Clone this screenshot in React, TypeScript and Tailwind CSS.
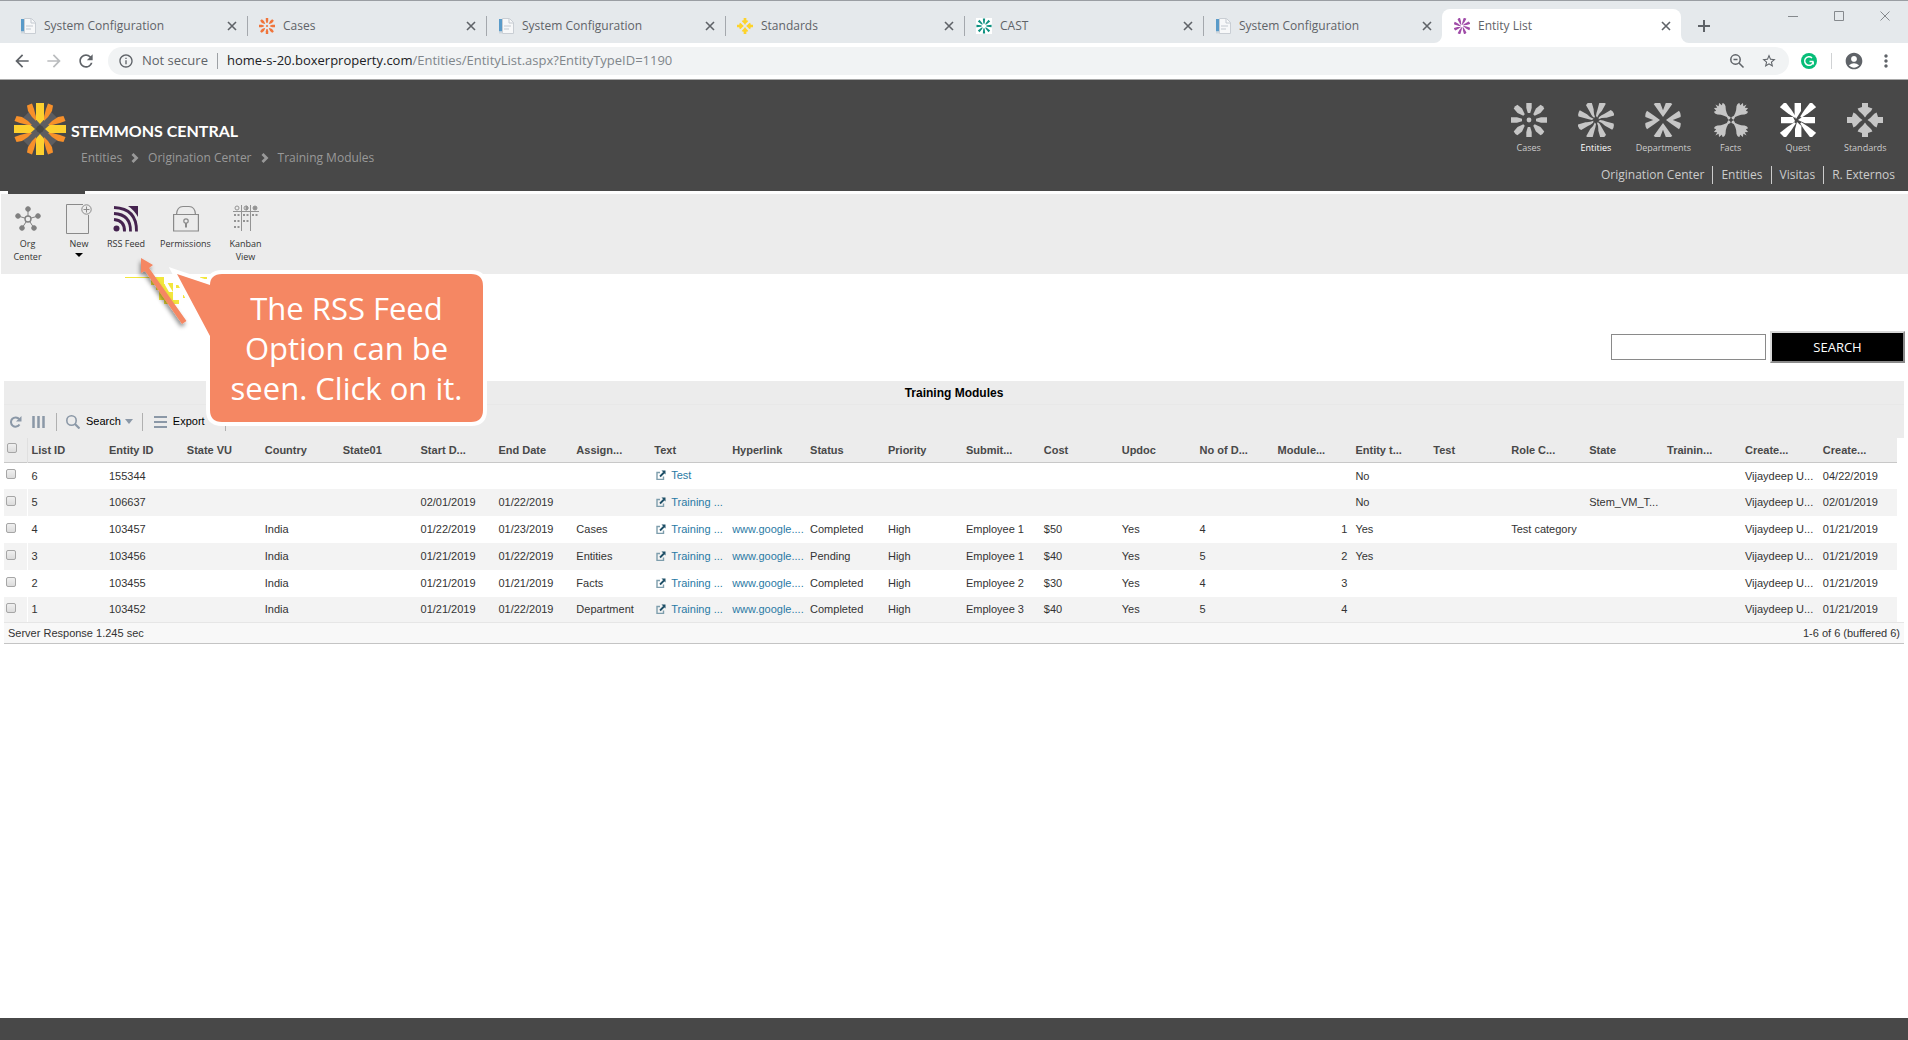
import type { ReactNode } from 'react';
import { clsx } from 'clsx';
import { MdAccountCircle, MdArrowBack, MdArrowForward, MdInfoOutline, MdMoreVert, MdRefresh, MdStarBorder } from 'react-icons/md';

type BurstName = 'cases' | 'entities' | 'departments' | 'facts' | 'quest' | 'standards' | 'cast';

const QUARTERS = [0, 90, 180, 270];
const DIAGONALS = [45, 135, 225, 315];
const EIGHTHS = [0, 45, 90, 135, 180, 225, 270, 315];

function Spin({ angles, d }: { angles: number[]; d: string }) {
  return (
    <>
      {angles.map((a) => (
        <path key={a} d={d} transform={`rotate(${a})`} />
      ))}
    </>
  );
}

function Burst({ name, className }: { name: BurstName; className?: string }) {
  return (
    <svg viewBox="-18 -17 36 34" className={className} fill="currentColor" aria-hidden="true">
      {name === 'cases' && (
        <>
          <circle r="2.4" />
          <Spin angles={QUARTERS} d="M-2.7-18H2.7V-12L1.2-7H-1.2L-2.7-12Z" />
          <Spin angles={DIAGONALS} d="M-2.6-19 Q0-20 2.6-19 L3.2-13L1-7H-1L-3.2-13Z" />
        </>
      )}
      {name === 'entities' && (
        <Spin angles={EIGHTHS} d="M3.4-17.5 Q6.5-18.700 9.800-16.2 L5.8-9 Q2.4-6 1.2-2.4 L0-4 Q.4-7.5 1.4-10Z" />
      )}
      {name === 'departments' && (
        <Spin angles={QUARTERS} d="M0-3L-4-8.4L-9.3-16 Q-6.500-18.200-3-17.6L0-9.8L3-17.6Q6.500-18.200 9.3-16L4-8.4Z" />
      )}
      {name === 'facts' && (
        <Spin
          angles={DIAGONALS}
          d="M-1.7-2.2 L-.9-5 L-2-8 Q-3.200-11-5.8-13.500 Q-7.400-16-6.200-18 L-4-17 L-3.600-20.500 L-1-18.5 L0-22 L1-18.5 L3.600-20.500 L4-17 L6.2-18 Q7.400-16 5.8-13.500 Q3.200-11 2-8 L.9-5 L1.7-2.2 L0-1.400Z"
        />
      )}
      {name === 'quest' && (
        <>
          <path d="M-3.4-18H3V-9L-2-1L-3.4-4Z" />
          <path d="M17-3V3.2H7L0 0L4-3Z" />
          <path d="M3.4 18H-3V9L-1 2L3.4 6Z" />
          <path d="M-17-3V3.2H-5L-3 1L-5-3Z" />
          <Spin angles={DIAGONALS} d="M-3.8-22L3.8-22L2.6-12L.8-4H-.8L-2.6-12Z" />
        </>
      )}
      {name === 'standards' && (
        <Spin angles={QUARTERS} d="M-3-18H3V-13L7.4-11.600Q6.500-9 4.400-7.600Q1.8-5.500 0-2.500Q-1.8-5.500-4.400-7.600Q-6.500-9-7.4-11.600L-3-13Z" />
      )}
      {name === 'cast' && (
        <>
          <path fill="#ffffff" d="M-18-18H18V18H-18Z" />
          <Spin angles={EIGHTHS} d="M-2.6-17H2.6L1.6-7L0-4L-1.6-7Z" />
        </>
      )}
    </svg>
  );
}

function PageIcon() {
  return (
    <svg viewBox="0 0 16 16" className="h-4 w-4" aria-hidden="true">
      <path d="M1 1h3.5v12.500H1z" fill="#5a9bc9" />
      <path d="M4.500 0.500h7l4 4V15.500h-11z" fill="#f7f8f9" stroke="#c9ced4" />
      <path d="M11 1v4h4.500M6 8h7M6 11h5" stroke="#c3c9d0" fill="none" />
      <path d="M1 13.500h3.500v2H1z" fill="#cfd6dc" />
    </svg>
  );
}

const tabs: { title: string; icon: ReactNode; active?: boolean }[] = [
  { title: 'System Configuration', icon: <PageIcon /> },
  { title: 'Cases', icon: <Burst name="cases" className="h-4 w-4 text-[#f0743a]" /> },
  { title: 'System Configuration', icon: <PageIcon /> },
  { title: 'Standards', icon: <Burst name="standards" className="h-4 w-4 text-[#fdd32b]" /> },
  { title: 'CAST', icon: <Burst name="cast" className="h-4 w-4 text-[#0d9080]" /> },
  { title: 'System Configuration', icon: <PageIcon /> },
  { title: 'Entity List', icon: <Burst name="entities" className="h-4 w-4 text-[#a04ca8]" />, active: true },
];

function CloseIcon() {
  return (
    <svg viewBox="0 0 10 10" className="h-[10px] w-[10px]" stroke="currentColor" strokeWidth="1.600" aria-hidden="true">
      <path d="M1 1l8 8M9 1l-8 8" />
    </svg>
  );
}

function TabStrip() {
  return (
    <div className="flex h-[43px] border-t border-[#9a9ea3] bg-[#e5e9ec] pl-2">
      <div className="flex min-w-0 flex-1 pt-2">
        {tabs.map((tab, i) => (
          <div
            key={i}
            className={clsx(
              'relative flex min-w-0 max-w-[239px] flex-1 items-center pr-[10px] pl-3',
              tab.active && 'rounded-t-lg bg-white',
            )}
          >
            {tab.icon}
            <span className="ml-2 flex-1 truncate text-[12px] text-[#5f6368]">{tab.title}</span>
            <button type="button" aria-label="Close tab" className="text-[#5f6368]">
              <CloseIcon />
            </button>
            {!tab.active && i < 5 && <span className="absolute top-[7px] -right-px h-5 w-px bg-[#a4a8ad]" />}
            {tab.active && (
              <>
                <svg viewBox="0 0 8 8" className="absolute bottom-0 -left-2 h-2 w-2" aria-hidden="true">
                  <path d="M8 0v8H0a8 8 0 0 0 8-8z" fill="#fff" />
                </svg>
                <svg viewBox="0 0 8 8" className="absolute -right-2 bottom-0 h-2 w-2" aria-hidden="true">
                  <path d="M0 0v8h8a8 8 0 0 1-8-8z" fill="#fff" />
                </svg>
              </>
            )}
          </div>
        ))}
        <button type="button" aria-label="New tab" className="ml-[17px] flex items-center text-[#5f6368]">
          <svg viewBox="0 0 12 12" className="h-3 w-3" stroke="currentColor" strokeWidth="2" aria-hidden="true">
            <path d="M6 0v12M0 6h12" />
          </svg>
        </button>
      </div>
      <div className="flex h-[29px] text-[#85898d]">
        {['M0 5.500h10', 'M.5.500h9v9h-9z', 'M.5.500l9 9M9.500.500l-9 9'].map((d, i) => (
          <button key={i} type="button" aria-label={['Minimize', 'Maximize', 'Close'][i]} className="flex w-[46px] items-center justify-center">
            <svg viewBox="0 0 10 10" className="h-[10px] w-[10px]" fill="none" stroke="currentColor" aria-hidden="true">
              <path d={d} />
            </svg>
          </button>
        ))}
      </div>
    </div>
  );
}

function AddressBar() {
  return (
    <div className="flex h-[37px] items-center border-b border-[#a9a9a9] bg-white px-3 text-[#5f6368]">
      <button type="button" aria-label="Back"><MdArrowBack className="h-5 w-5" /></button>
      <button type="button" aria-label="Forward" className="ml-3 text-[#babcbe]"><MdArrowForward className="h-5 w-5" /></button>
      <button type="button" aria-label="Reload" className="ml-3"><MdRefresh className="h-5 w-5" /></button>
      <div className="ml-3 flex h-7 flex-1 items-center rounded-full bg-[#f1f3f4] pl-[10px] text-[13px]">
        <MdInfoOutline className="h-4 w-4" />
        <span className="ml-2 w-[67px] whitespace-nowrap">Not secure</span>
        <span className="ml-2 h-4 w-px bg-[#9da1a5]" />
        <span className="ml-[9px] flex-1 text-[#80868b]">
          <span className="text-[#202124]">home-s-20.boxerproperty.com</span>/Entities/EntityList.aspx?EntityTypeID=1190
        </span>
        <svg viewBox="0 0 16 16" className="h-4 w-4" fill="none" stroke="currentColor" strokeWidth="1.500" aria-hidden="true">
          <circle cx="6.500" cy="6.500" r="4.700" />
          <path d="M10 10l4.500 4.500M4.500 6.500h4" />
        </svg>
        <button type="button" aria-label="Bookmark" className="mr-3 ml-4"><MdStarBorder className="h-4 w-4" /></button>
      </div>
      <svg viewBox="0 0 16 16" className="ml-3 h-4 w-4" aria-label="Grammarly">
        <circle cx="8" cy="8" r="8" fill="#06bd78" />
        <path d="M11 5A4.300 4.300 0 1 0 12.200 8.800M12.400 8.500H8.500M12.200 8.400v3" fill="none" stroke="#fff" strokeWidth="1.500" />
      </svg>
      <span className="ml-[14px] h-4 w-px bg-[#d0d2d4]" />
      <button type="button" aria-label="Profile" className="ml-3"><MdAccountCircle className="h-5 w-5" /></button>
      <button type="button" aria-label="Menu" className="ml-3"><MdMoreVert className="h-5 w-5" /></button>
    </div>
  );
}

function Logo() {
  return (
    <svg viewBox="-26 -26 52 52" className="h-[52px] w-[52px]" aria-hidden="true">
      <g fill="#5d5d60">
        <Spin angles={DIAGONALS} d="M-7-20H7V-3H-7Z" />
      </g>
      <g fill="#f7902a">
        <Spin angles={QUARTERS} d="M4-12L6-20L8-25.500L13-23.500L12-18L8-12L4-8Z" />
        <Spin angles={QUARTERS} d="M-4-12L-6-20L-8-25.500L-13-23.500L-12-18L-8-12L-4-8Z" />
      </g>
      <g fill="#fdd02f">
        <Spin angles={QUARTERS} d="M-4-26H4V-9.500L0-5L-4-9.500Z" />
      </g>
      <circle r="3.500" fill="#484848" />
    </svg>
  );
}

function Chevron() {
  return (
    <svg viewBox="0 0 8 10" className="mx-[9px] h-[10px] w-2" fill="none" stroke="currentColor" strokeWidth="2.800" aria-hidden="true">
      <path d="M1.500 1l4 4-4 4" />
    </svg>
  );
}

const apps: { label: string; icon: BurstName }[] = [
  { label: 'Cases', icon: 'cases' },
  { label: 'Entities', icon: 'entities' },
  { label: 'Departments', icon: 'departments' },
  { label: 'Facts', icon: 'facts' },
  { label: 'Quest', icon: 'quest' },
  { label: 'Standards', icon: 'standards' },
];

function Header() {
  return (
    <header className="flex h-[111px] justify-between bg-[#484848] pt-[23px]">
      <div className="flex pl-[14px]">
        <Logo />
        <div className="pt-4 pl-[5px]">
          <div className="font-[Lato,sans-serif] text-[16px] leading-[23px] font-bold text-white">STEMMONS CENTRAL</div>
          <nav className="flex items-center pt-[7px] pl-[10px] text-[12px] leading-[18px] text-[#999]">
            <a href="#">Entities</a>
            <Chevron />
            <a href="#">Origination Center</a>
            <Chevron />
            <a href="#">Training Modules</a>
          </nav>
        </div>
      </div>
      <div className="flex flex-col items-end">
        <nav className="flex w-[413px] pr-[9px]">
          {apps.map((app) => (
            <a key={app.label} href="#" className="flex flex-1 basis-0 flex-col items-center">
              <Burst name={app.icon} className={clsx('h-[34px] w-9', app.icon === 'quest' ? 'text-white' : 'text-[#c6c6c6]')} />
              <span className={clsx('mt-1 text-[9px] leading-[14px]', app.icon === 'entities' ? 'text-white' : 'text-[#ccc]')}>
                {app.label}
              </span>
            </a>
          ))}
        </nav>
        <nav className="mt-[11px] flex divide-x divide-[#ccc] pr-[5px] text-[12px] leading-[18px] text-[#ccc]">
          <a href="#" className="px-2">Origination Center</a>
          <a href="#" className="px-2">Entities</a>
          <a href="#" className="px-2">Visitas</a>
          <a href="#" className="px-2">R. Externos</a>
        </nav>
      </div>
    </header>
  );
}

function ToolButton({ label, width, icon, menu }: { label: ReactNode; width: string; icon: ReactNode; menu?: boolean }) {
  return (
    <button type="button" className={clsx('flex flex-col items-center text-[9px] leading-[13px] text-[#333]', width)}>
      {icon}
      <span className="mt-[3px]">{label}</span>
      {menu && (
        <svg viewBox="0 0 8 4" className="mt-[3px] h-1 w-2" aria-hidden="true">
          <path d="M0 0h8L4 4z" />
        </svg>
      )}
    </button>
  );
}

function Callout() {
  return (
    <div className="absolute top-[66px] left-[120px] h-[190px] w-[370px]">
      <svg viewBox="0 0 370 190" className="absolute inset-0 h-full w-full" aria-hidden="true">
        <defs>
          <filter id="soft" x="-30%" y="-30%" width="160%" height="160%">
            <feDropShadow dx="-1" dy="3" stdDeviation="2" floodOpacity="0.45" />
          </filter>
        </defs>
        <path d="M5 20h26v1H5zM31 20h13v8H31zM36 27h14v6H36zM39 33h14v10H39zM44 43h15v4H44zM46 26h7v9h-7zM56 28h4v3h-4zM63 38h2v3h-2zM80 20h7v2h-7z" fill="#f2e63c" />
        <path d="M44 20l9 15h-4l-4-7z" fill="#fff" />
        <g filter="url(#soft)" fill="#f58763">
          <path d="M21 1l12 7-4 3 37.500 53-4.500 3L25 14l-4 2z" />
        </g>
        <path
          d="M57 17L90 28C90 21 94 17 102 17H351Q363 17 363 29V153Q363 165 351 165H102Q90 165 90 153V79Z"
          fill="#f58763"
          stroke="#fff"
          strokeWidth="8"
          paintOrder="stroke"
        />
      </svg>
      <p className="absolute top-[31px] right-[7px] w-[273px] text-center text-[31px] leading-[40px] text-white">
        The RSS Feed
        <br />
        Option can be
        <br />
        seen. Click on it.
      </p>
    </div>
  );
}

function ActionBar() {
  return (
    <div className="relative h-[83px] bg-white">
      <div className="ml-2 h-[3px] w-[77px] bg-[#484848]" />
      <div className="ml-px flex h-20 items-start bg-[#ececec] pt-[10px] pl-px">
        <ToolButton
          width="w-[51px]"
          label={<>Org<br />Center</>}
          icon={
            <svg viewBox="0 0 26 30" className="h-[30px] w-[26px]" fill="#808080" stroke="#808080" aria-hidden="true">
              <path d="M13 5v9M3 12l10 3 10-3M7 24l6-9 6 9" fill="none" />
              <circle cx="13" cy="5" r="2.300" />
              <circle cx="3" cy="12" r="2.300" />
              <circle cx="23" cy="12" r="2.300" />
              <circle cx="7" cy="24" r="2.300" />
              <circle cx="19" cy="24" r="2.300" />
              <circle cx="13" cy="15" r="3" fill="#ececec" strokeWidth="1.400" />
            </svg>
          }
        />
        <ToolButton
          width="w-[52px]"
          label="New"
          menu
          icon={
            <svg viewBox="0 0 26 30" className="h-[30px] w-[26px]" fill="none" stroke="#8a8a8a" aria-hidden="true">
              <path d="M22.500 11v18.500h-22v-29H17" />
              <circle cx="20.500" cy="5.500" r="4.700" />
              <path d="M20.500 2.500v6M17.500 5.500h6" />
            </svg>
          }
        />
        <ToolButton
          width="w-[42px]"
          label="RSS Feed"
          icon={
            <svg viewBox="0 0 26 30" className="h-[30px] w-[26px]" fill="none" stroke="#45234f" strokeWidth="2.800" aria-hidden="true">
              <circle cx="3.500" cy="24.500" r="3" fill="#45234f" stroke="none" />
              <path d="M1 15.500q11 1 10.500 12M1 9.500q17 1 16.500 18M1 3.500q23 1 22.500 24" />
              <path d="M15 2h10v11Q21 6 15 2z" fill="#45234f" stroke="none" />
            </svg>
          }
        />
        <ToolButton
          width="w-[77px]"
          label="Permissions"
          icon={
            <svg viewBox="0 0 26 30" className="h-[30px] w-[26px]" fill="none" stroke="#8a8a8a" strokeWidth="1.200" aria-hidden="true">
              <path d="M.600 10.500h24.800v16.500H.600zM3.500 10.500Q4 2.500 10 2.500h6Q22 2.500 22.500 10.500" />
              <circle cx="13" cy="17" r="2.200" />
              <path d="M13 19v4.500" strokeWidth="2" />
            </svg>
          }
        />
        <ToolButton
          width="w-[43px]"
          label={<>Kanban<br />View</>}
          icon={
            <svg viewBox="0 0 26 30" className="h-[30px] w-[26px]" fill="none" stroke="#949494" aria-hidden="true">
              <path d="M0 7.500h26M8.500 1v26M17.500 1v26" />
              <circle cx="4" cy="4" r="2" />
              <circle cx="13" cy="4" r="2" />
              <path d="M13 2a2 2 0 0 1 0 4z" fill="#949494" />
              <circle cx="22" cy="4" r="2" fill="#949494" />
              <path d="M1 11h6M10 11h6M19 11h6M1 17h6M10 17h6M1 23h6" strokeWidth="2" strokeDasharray="2 1.500" />
            </svg>
          }
        />
      </div>
      <Callout />
    </div>
  );
}

function SearchRow() {
  return (
    <form className="flex items-center justify-end gap-1 pt-[57px] pr-[3px] pb-[18px]">
      <input type="text" aria-label="Search entities" className="h-[26px] w-[155px] border border-[#8a8a8a] bg-white px-1 text-[13px]" />
      <button type="button" className="h-8 w-[135px] border-2 border-t-[#d8d8d8] border-r-[#8a8a8a] border-b-[#8a8a8a] border-l-[#d8d8d8] bg-black pt-px text-[13px] text-white">
        SEARCH
      </button>
    </form>
  );
}

const columns = [
  'List ID', 'Entity ID', 'State VU', 'Country', 'State01', 'Start D...', 'End Date', 'Assign...',
  'Text', 'Hyperlink', 'Status', 'Priority', 'Submit...', 'Cost', 'Updoc', 'No of D...',
  'Module...', 'Entity t...', 'Test', 'Role C...', 'State', 'Trainin...', 'Create...', 'Create...',
];

const LINK = 'www.google....';
const OWNER = 'Vijaydeep U...';

const rows = [
  ['6', '155344', '', '', '', '', '', '', 'Test', '', '', '', '', '', '', '', '', 'No', '', '', '', '', OWNER, '04/22/2019'],
  ['5', '106637', '', '', '', '02/01/2019', '01/22/2019', '', 'Training ...', '', '', '', '', '', '', '', '', 'No', '', '', 'Stem_VM_T...', '', OWNER, '02/01/2019'],
  ['4', '103457', '', 'India', '', '01/22/2019', '01/23/2019', 'Cases', 'Training ...', LINK, 'Completed', 'High', 'Employee 1', '$50', 'Yes', '4', '1', 'Yes', '', 'Test category', '', '', OWNER, '01/21/2019'],
  ['3', '103456', '', 'India', '', '01/21/2019', '01/22/2019', 'Entities', 'Training ...', LINK, 'Pending', 'High', 'Employee 1', '$40', 'Yes', '5', '2', 'Yes', '', '', '', '', OWNER, '01/21/2019'],
  ['2', '103455', '', 'India', '', '01/21/2019', '01/21/2019', 'Facts', 'Training ...', LINK, 'Completed', 'High', 'Employee 2', '$30', 'Yes', '4', '3', '', '', '', '', '', OWNER, '01/21/2019'],
  ['1', '103452', '', 'India', '', '01/21/2019', '01/22/2019', 'Department', 'Training ...', LINK, 'Completed', 'High', 'Employee 3', '$40', 'Yes', '5', '4', '', '', '', '', '', OWNER, '01/21/2019'],
];

function Check({ label }: { label: string }) {
  return (
    <input
      type="checkbox"
      aria-label={label}
      className="block h-[10px] w-[10px] appearance-none rounded-xs border border-[#a6a6a6] bg-linear-to-b from-[#f0f0f0] to-[#dcdcdc]"
    />
  );
}

function Cell({ column, value }: { column: number; value: string }) {
  if (column === 8) {
    return (
      <a href="#" className="flex items-center gap-[5px] pb-px text-[#2a7aa5]">
        <svg viewBox="0 0 10 10" className="ml-[2px] h-[10px] w-[10px]" fill="none" stroke="#2d6480" aria-hidden="true">
          <path d="M4 2.500H1V9.500H7.500V6.500" stroke="#7d9dac" strokeWidth="1.400" />
          <path d="M4 6.500L8 2.500" stroke="#1d4e66" strokeWidth="1.800" />
          <path d="M5.500 0.500H9.500V4.500z" fill="#1d4e66" stroke="none" />
        </svg>
        {value}
      </a>
    );
  }
  if (column === 9 && value) return <a href="#" className="text-[#2a7aa5]">{value}</a>;
  return <>{value}</>;
}

function Grid() {
  return (
    <section className="mx-1 font-['Liberation_Sans',Arial,sans-serif] text-[11px] text-[#333]">
      <h1 className="bg-[#ececec] pt-px text-center text-[12px] leading-[22px] font-bold text-black">Training Modules</h1>
      <div className="flex h-[34px] items-center border-t border-[#e8e8e8] bg-[#ececec] pl-[5px] text-black">
        <button type="button" aria-label="Refresh">
          <svg viewBox="0 0 13 12" className="h-3 w-[13px]" fill="none" stroke="#8b98a7" strokeWidth="2" aria-hidden="true">
            <path d="M10.200 3.200A4.600 4.600 0 1 0 10.500 8.500" />
            <path d="M12.500 0v5.500H7z" fill="#8b98a7" stroke="none" />
          </svg>
        </button>
        <button type="button" aria-label="Columns" className="ml-[10px]">
          <svg viewBox="0 0 13 12" className="h-3 w-[13px]" stroke="#8b98a7" strokeWidth="2.500" aria-hidden="true">
            <path d="M1.500 0v12M6.500 0v12M11.500 0v12" />
          </svg>
        </button>
        <span className="ml-[11px] h-[18px] w-px bg-[#b0b0b0]" />
        <button type="button" className="ml-[9px] flex items-center">
          <svg viewBox="0 0 14 14" className="h-[14px] w-[14px]" fill="none" stroke="#8b98a7" aria-hidden="true">
            <circle cx="5.500" cy="5.500" r="4.700" strokeWidth="1.600" />
            <path d="M9 9l4.500 4.500" strokeWidth="2.200" />
          </svg>
          <span className="ml-[6px]">Search</span>
          <svg viewBox="0 0 8 5" className="ml-1 h-[5px] w-2" fill="#8b98a7" aria-hidden="true"><path d="M0 0h8L4 5z" /></svg>
        </button>
        <span className="ml-[9px] h-[18px] w-px bg-[#b0b0b0]" />
        <button type="button" className="ml-[11px] flex items-center">
          <svg viewBox="0 0 13 12" className="h-3 w-[13px]" stroke="#8b98a7" strokeWidth="2.200" aria-hidden="true">
            <path d="M0 1h13M0 6h13M0 11h13" />
          </svg>
          <span className="ml-[6px]">Export</span>
          <svg viewBox="0 0 8 5" className="ml-1 h-[5px] w-2" fill="#8b98a7" aria-hidden="true"><path d="M0 0h8L4 5z" /></svg>
        </button>
        <span className="ml-2 h-[18px] w-px bg-[#b0b0b0]" />
      </div>
      <div className="border-b border-[#e6e6e6] pr-[7px]">
        <table className="w-full table-fixed border-collapse">
          <thead>
            <tr className="h-6 border-b border-[#c8c8c8] bg-[#ececec] text-left text-[#484848]">
              <th className="w-[23px] border-r border-[#e0e0e0] pb-1 pl-[3px]"><Check label="Select all" /></th>
              {columns.map((c, i) => (
                <th key={i} className="overflow-hidden px-1 font-bold whitespace-nowrap">{c}</th>
              ))}
            </tr>
          </thead>
          <tbody>
            {rows.map((row) => (
              <tr key={row[0]} className="h-[27px] last:h-[25px] even:bg-[#f3f3f3]">
                <td className="border-r border-white pb-[3px] pl-[2px]"><Check label={`Select ${row[1]}`} /></td>
                {row.map((value, i) => (
                  <td key={i} className={clsx('px-1 whitespace-nowrap', i === 16 && 'text-right')}>
                    <Cell column={i} value={value} />
                  </td>
                ))}
              </tr>
            ))}
          </tbody>
        </table>
      </div>
      <div className="flex justify-between border-b border-[#c4c4c4] bg-[#f8f8f8] px-1 leading-[20px]">
        <span>Server Response 1.245 sec</span>
        <span>1-6 of 6 (buffered 6)</span>
      </div>
    </section>
  );
}

export default function App() {
  return (
    <div className="flex min-h-screen flex-col bg-white font-['Open_Sans','Noto_Sans',sans-serif]">
      <TabStrip />
      <AddressBar />
      <Header />
      <ActionBar />
      <main className="flex-1">
        <SearchRow />
        <Grid />
      </main>
      <footer className="h-[22px] bg-[#484848]" />
    </div>
  );
}
